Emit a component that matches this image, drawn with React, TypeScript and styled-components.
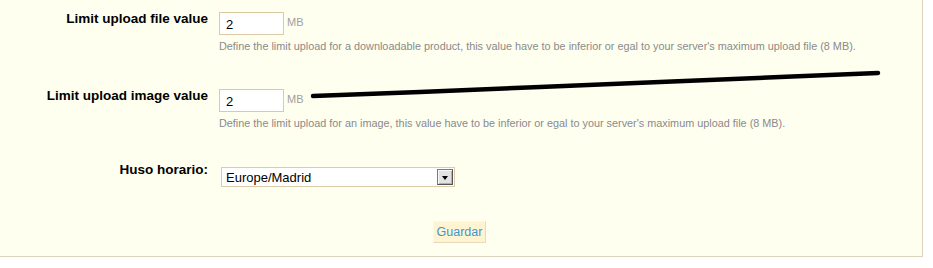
import React from "react";
import styled, { createGlobalStyle } from "styled-components";

const GlobalStyle = createGlobalStyle`
    html, body {
        margin: 0;
        padding: 0;
        background: #ffffff;
        font-family: "Liberation Sans", Arial, sans-serif;
    }
`;

const Panel = styled.div`
    position: relative;
    box-sizing: border-box;
    width: 923px;
    height: 257px;
    background: #fffff0;
    border-right: 1px solid #ddd3bd;
    border-bottom: 1px solid #ddd3bd;
    padding-top: 12px;
`;

const Row = styled.div<{ $gap: number }>`
    display: flex;
    align-items: flex-start;
    margin-bottom: ${(p) => p.$gap}px;
`;

const Label = styled.label<{ $shift?: number }>`
    width: 208px;
    flex: none;
    text-align: right;
    font-weight: bold;
    font-size: 13.5px;
    line-height: 16px;
    color: #000;
    margin-top: ${(p) => p.$shift ?? -1}px;
`;

const Field = styled.div`
    margin-left: 11px;
`;

const InputLine = styled.div`
    display: flex;
    align-items: flex-start;
`;

const TextInput = styled.input`
    box-sizing: border-box;
    width: 65px;
    height: 23px;
    border: 1px solid #dccaa6;
    background: #fff;
    padding: 2px 6px 0;
    font-family: "Liberation Sans", Arial, sans-serif;
    font-size: 13px;
    color: #000;
    outline: none;
`;

const Unit = styled.span`
    margin-left: 3px;
    padding-top: 4px;
    font-size: 11px;
    color: #a0a0a0;
`;

const Help = styled.p`
    margin: 4px 0 0;
    font-size: 10.85px;
    line-height: 14px;
    color: #8a8a8a;
    white-space: nowrap;
`;

const SelectBox = styled.div`
    box-sizing: border-box;
    width: 234px;
    height: 20px;
    margin-left: 2px;
    display: flex;
    align-items: center;
    justify-content: space-between;
    border: 1px solid #ddccaa;
    background: #fff;
    padding: 0 1px 0 4px;
    font-size: 13px;
    color: #000;
`;

const ArrowButton = styled.span`
    box-sizing: border-box;
    width: 16px;
    height: 16px;
    display: flex;
    align-items: center;
    justify-content: center;
    background: #e2e2e2;
    border: 1px solid;
    border-color: #7a7a7a #555 #555 #7a7a7a;
    box-shadow: inset 1px 1px 0 #f8f8f8, inset -1px -1px 0 #b0b0b0;

    &::after {
        content: "";
        border-left: 3.5px solid transparent;
        border-right: 3.5px solid transparent;
        border-top: 4px solid #000;
        margin-top: 1px;
    }
`;

const Actions = styled.div`
    display: flex;
    padding-left: 433px;
`;

const SaveButton = styled.button`
    box-sizing: border-box;
    width: 53px;
    height: 22px;
    padding: 0;
    background: #fff4d2;
    border: 1px solid;
    border-color: #fff8e4 #e6dab8 #e6dab8 #fff8e4;
    font-family: "Liberation Sans", Arial, sans-serif;
    font-size: 12.5px;
    color: #3d96d4;
    cursor: pointer;
`;

const Scribble = styled.svg`
    position: absolute;
    left: 0;
    top: 0;
    pointer-events: none;
`;

const App = () => {
    return (
        <>
            <GlobalStyle />
            <Panel>
                <Row $gap={36}>
                    <Label>Limit upload file value</Label>
                    <Field>
                        <InputLine>
                            <TextInput defaultValue="2" />
                            <Unit>MB</Unit>
                        </InputLine>
                        <Help>
                            Define the limit upload for a downloadable product, this value have to be inferior or egal to your server's maximum upload file (8 MB).
                        </Help>
                    </Field>
                </Row>
                <Row $gap={37}>
                    <Label>Limit upload image value</Label>
                    <Field>
                        <InputLine>
                            <TextInput defaultValue="2" />
                            <Unit>MB</Unit>
                        </InputLine>
                        <Help>
                            Define the limit upload for an image, this value have to be inferior or egal to your server's maximum upload file (8 MB).
                        </Help>
                    </Field>
                </Row>
                <Row $gap={34}>
                    <Label $shift={-5}>Huso horario:</Label>
                    <Field>
                        <SelectBox>
                            <span>Europe/Madrid</span>
                            <ArrowButton />
                        </SelectBox>
                    </Field>
                </Row>
                <Actions>
                    <SaveButton>Guardar</SaveButton>
                </Actions>
                <Scribble width="923" height="257">
                    <polyline
                        points="313,96 420,92 540,87 660,82 780,77 878,73"
                        fill="none"
                        stroke="#000"
                        strokeWidth="4.5"
                        strokeLinecap="round"
                        strokeLinejoin="round"
                    />
                </Scribble>
            </Panel>
        </>
    );
};

export default App;
